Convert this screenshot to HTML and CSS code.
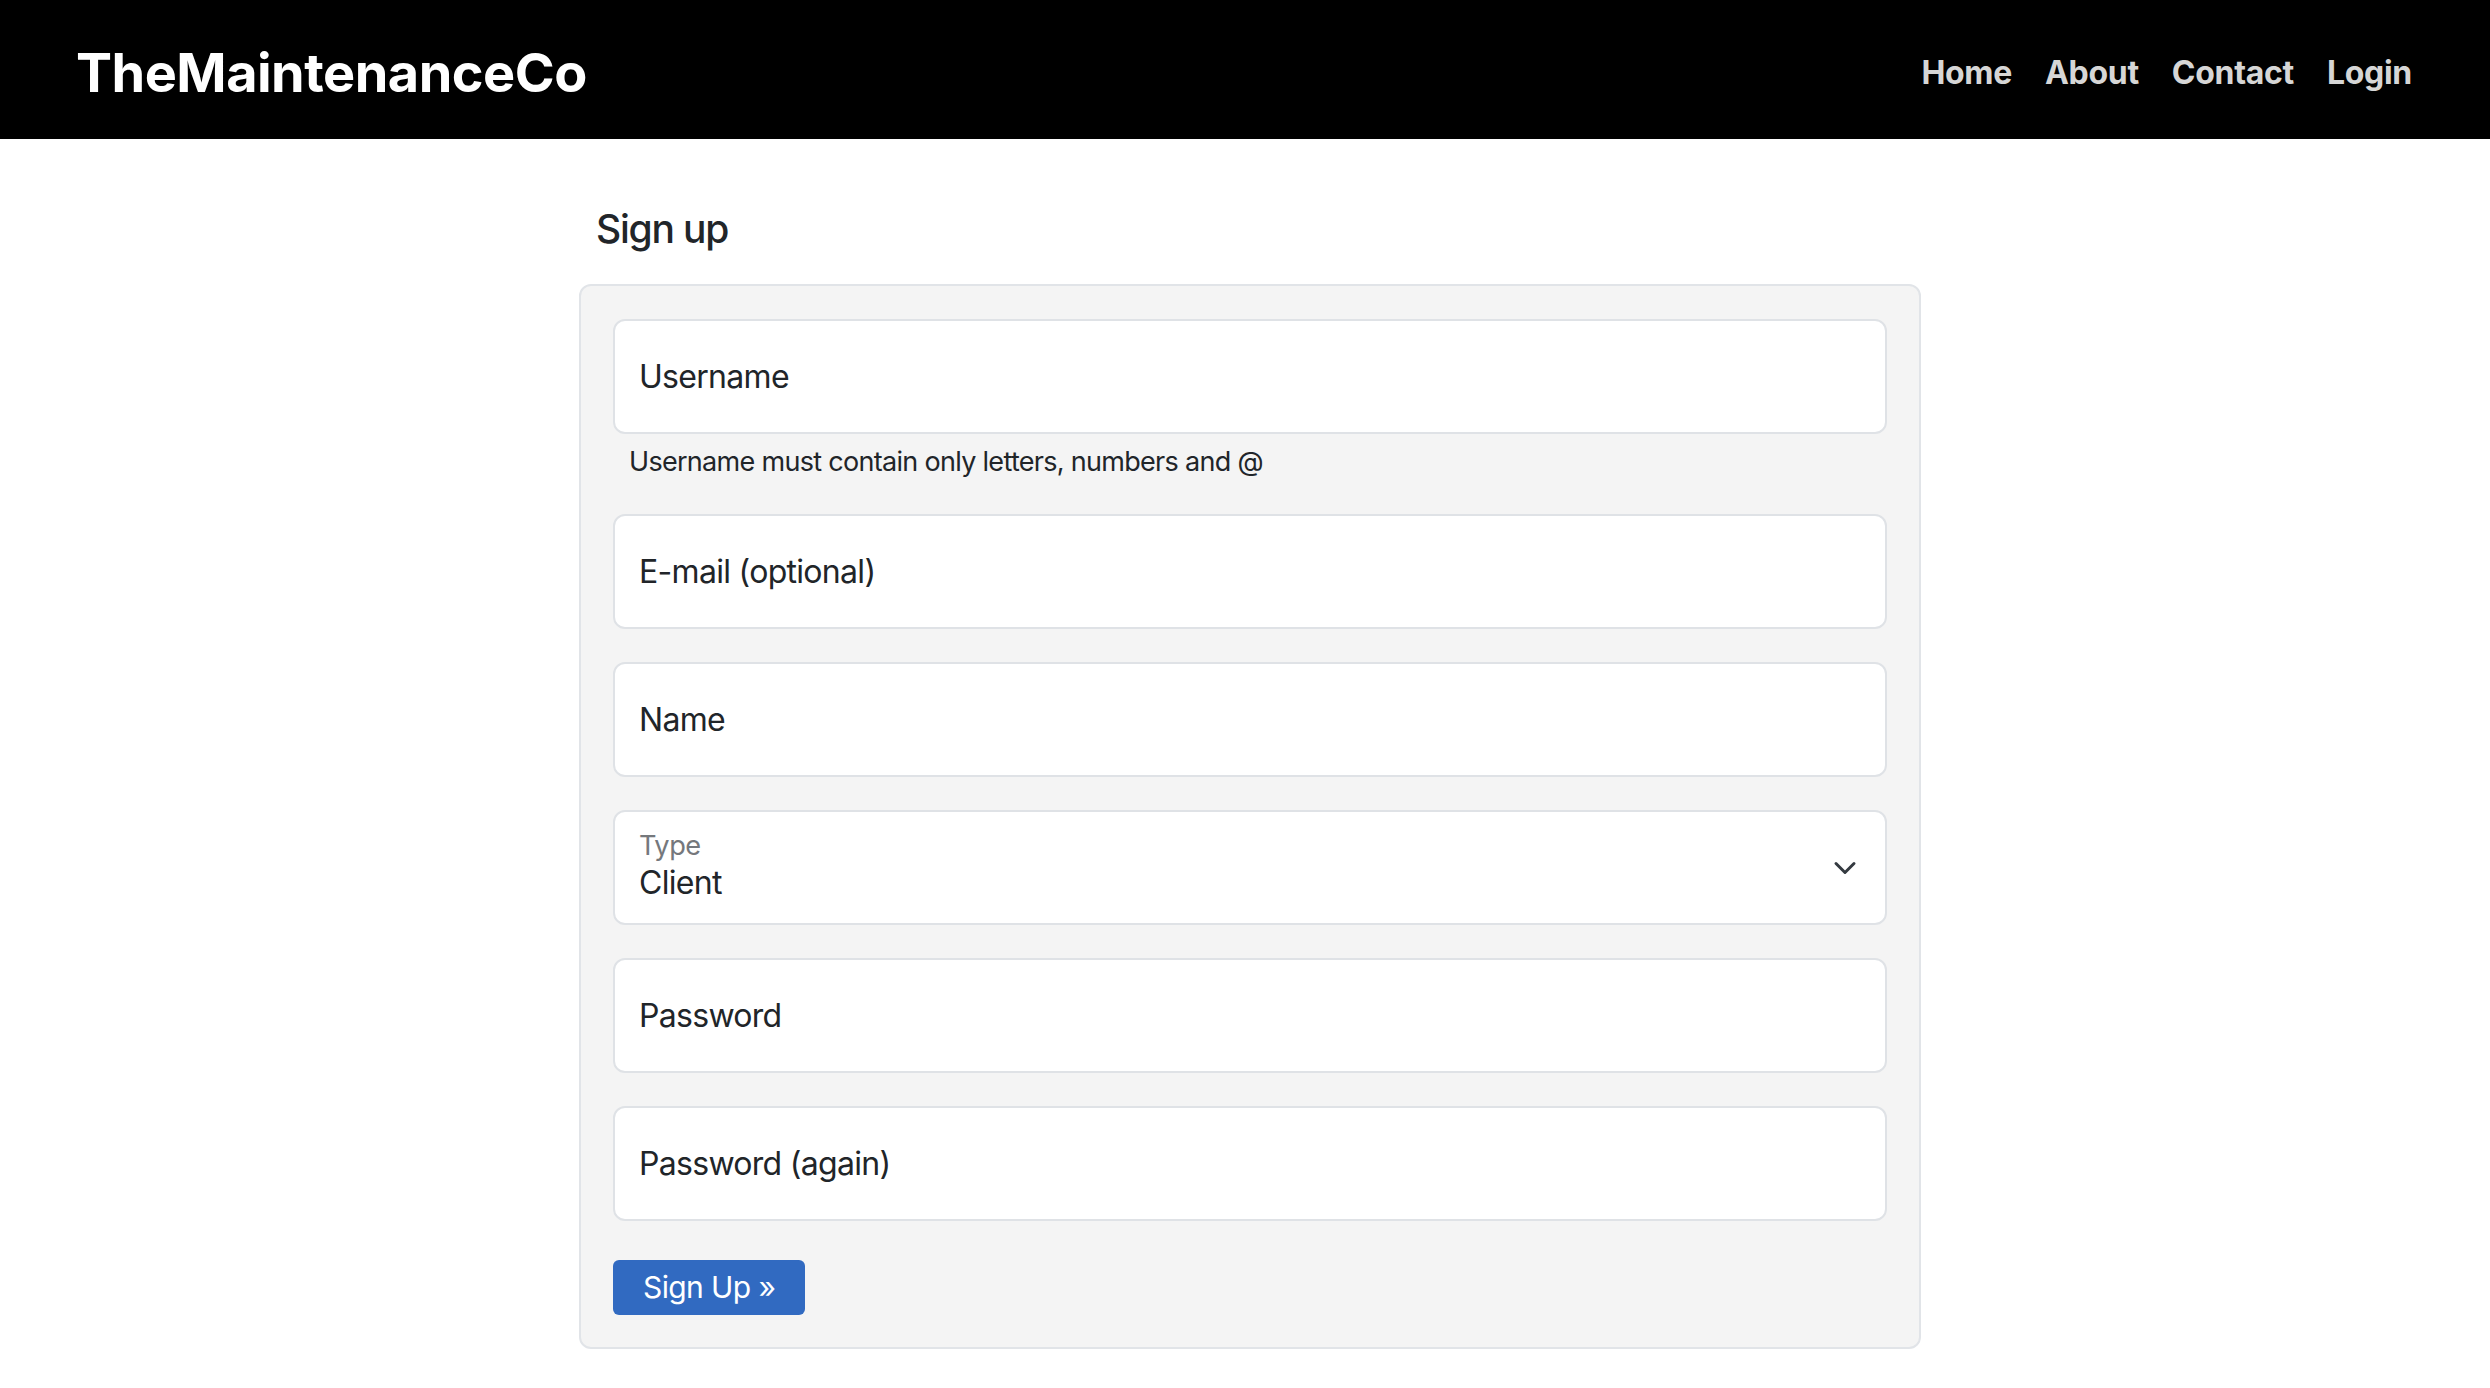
FILE: index.html
```html
<!DOCTYPE html>
<html lang="en">
<head>
<meta charset="utf-8">
<title>Sign up - TheMaintenanceCo</title>
<link rel="stylesheet" href="styles.css">
</head>
<body>
<header class="topbar">
  <a class="brand" href="#">TheMaintenanceCo</a>
  <nav class="nav">
    <a class="nav-link" href="#">Home</a>
    <a class="nav-link" href="#">About</a>
    <a class="nav-link" href="#">Contact</a>
    <a class="nav-link" href="#">Login</a>
  </nav>
</header>
<main class="page">
  <section class="signup">
    <h1 class="title">Sign up</h1>
    <form class="card">
      <div class="field"><span class="placeholder">Username</span></div>
      <div class="help">Username must contain only letters, numbers and @</div>
      <div class="field"><span class="placeholder">E-mail (optional)</span></div>
      <div class="field"><span class="placeholder">Name</span></div>
      <div class="field select">
        <div class="select-text">
          <span class="float-label">Type</span>
          <span class="value">Client</span>
        </div>
        <svg class="chevron" width="24" height="24" viewBox="0 0 16 16"><path d="M2 5l6 6 6-6" fill="none" stroke="#343a40" stroke-width="2" stroke-linecap="round" stroke-linejoin="round"/></svg>
      </div>
      <div class="field"><span class="placeholder">Password</span></div>
      <div class="field"><span class="placeholder">Password (again)</span></div>
      <button class="btn" type="button">Sign Up »</button>
    </form>
  </section>
</main>
</body>
</html>
```
FILE: styles.css
```css
* { box-sizing: border-box; }
body {
  margin: 0;
  font-family: Inter, "Noto Sans", "Liberation Sans", sans-serif;
  color: #212529;
  background: #fff;
}
.topbar {
  height: 139px;
  background: #000;
  display: flex;
  align-items: center;
  justify-content: space-between;
  padding: 5px 78px 0 76px;
}
.brand {
  color: #fff;
  text-decoration: none;
  font-weight: 700;
  font-size: 54px;
  letter-spacing: -0.5px;
}
.nav {
  display: flex;
  gap: 33px;
}
.nav-link {
  color: #d6d6d6;
  text-decoration: none;
  font-weight: 700;
  font-size: 32px;
  letter-spacing: -0.3px;
}
.page {
  display: flex;
  justify-content: center;
  padding-left: 10px;
}
.signup {
  width: 1342px;
}
.title {
  margin: 66px 0 31px 17px;
  font-size: 39px;
  font-weight: 500;
  line-height: 48px;
  letter-spacing: -1.2px;
}
.card {
  background: #f4f4f4;
  border: 2px solid #e1e4e8;
  border-radius: 12px;
  padding: 33px 32px 32px;
  display: flex;
  flex-direction: column;
  align-items: flex-start;
}
.field {
  width: 100%;
  height: 115px;
  background: #fff;
  border: 2px solid #dfe2e6;
  border-radius: 12px;
  padding: 0 24px;
  display: flex;
  align-items: center;
  margin-bottom: 33px;
  font-size: 32px;
  letter-spacing: -0.7px;
}
.help {
  font-size: 27px;
  line-height: 40px;
  letter-spacing: -0.7px;
  margin: -25px 0 32px 16px;
}
.select {
  align-items: flex-start;
  justify-content: space-between;
  padding-top: 17px;
}
.select-text {
  display: flex;
  flex-direction: column;
}
.float-label {
  font-size: 27.2px;
  line-height: 34px;
  color: #75787c;
  letter-spacing: -0.5px;
}
.value {
  font-size: 32px;
  line-height: 40px;
}
.chevron {
  align-self: center;
  margin-top: -17px;
  margin-right: 4px;
}
.btn {
  margin-top: 6px;
  height: 55px;
  padding: 0 30px;
  background: #316ac1;
  color: #fff;
  border: 0;
  border-radius: 6px;
  font-family: inherit;
  font-size: 30px;
  letter-spacing: -0.6px;
  line-height: 55px;
}
```
